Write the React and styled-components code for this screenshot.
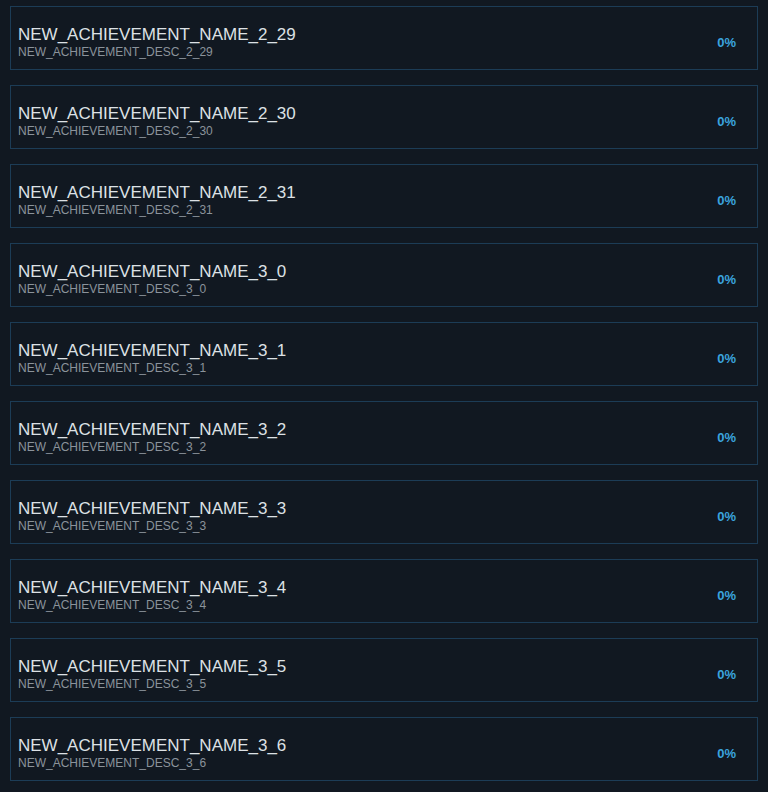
import React from "react";
import styled, { createGlobalStyle } from "styled-components";

const GlobalStyle = createGlobalStyle`
    html, body {
        margin: 0;
        padding: 0;
        background: #111821;
    }
    body {
        font-family: "Liberation Sans", Arial, sans-serif;
    }
`;

const List = styled.div`
    display: flex;
    flex-direction: column;
    gap: 15px;
    padding: 6px 10px 11px 10px;
`;

const Card = styled.div`
    display: flex;
    align-items: center;
    justify-content: space-between;
    height: 62px;
    border: 1px solid #1c3c56;
    background: #111821;
    padding: 0 21px 0 7px;
`;

const Info = styled.div`
    display: flex;
    flex-direction: column;
    gap: 1px;
    margin-top: 7px;
`;

const Name = styled.span`
    font-size: 17px;
    color: #dde1e5;
    line-height: 19px;
`;

const Desc = styled.span`
    font-size: 12px;
    color: #8b939b;
    line-height: 14px;
`;

const Percent = styled.span`
    font-size: 13px;
    font-weight: bold;
    color: #3ba4de;
    margin-top: 8px;
`;

const achievements = [
    "2_29", "2_30", "2_31", "3_0", "3_1", "3_2", "3_3", "3_4", "3_5", "3_6"
];

export default function App() {
    return <>
        <GlobalStyle />
        <List>
            {achievements.map(id => (
                <Card key={id}>
                    <Info>
                        <Name>NEW_ACHIEVEMENT_NAME_{id}</Name>
                        <Desc>NEW_ACHIEVEMENT_DESC_{id}</Desc>
                    </Info>
                    <Percent>0%</Percent>
                </Card>
            ))}
        </List>
    </>
}
